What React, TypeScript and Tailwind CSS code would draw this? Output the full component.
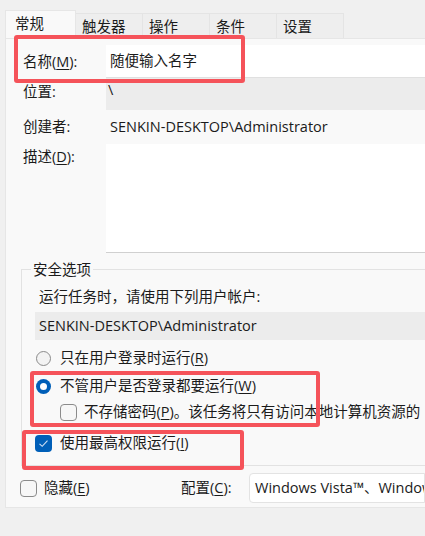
import React from "react";

const font = { fontFamily: '"Open Sans", "Noto Sans CJK SC", sans-serif' };

function U({ k }: { k: string }) {
  return (
    <>
      (<span className="underline underline-offset-2">{k}</span>)
    </>
  );
}

function Radio({ checked }: { checked?: boolean }) {
  return checked ? (
    <span className="flex h-[15px] w-[15px] shrink-0 items-center justify-center rounded-full bg-[#005fb8]">
      <span className="h-[7px] w-[7px] rounded-full bg-white" />
    </span>
  ) : (
    <span className="h-[15px] w-[15px] shrink-0 rounded-full border border-[#8b8b8b] bg-[#f3f3f3]" />
  );
}

function Check({ checked }: { checked?: boolean }) {
  return checked ? (
    <span className="flex h-[17px] w-[17px] shrink-0 items-center justify-center rounded-[4px] bg-[#005fb8]">
      <svg width="11" height="9" viewBox="0 0 11 9" fill="none">
        <path d="M1.5 4.8 L4.2 7.3 L9.5 1.6" stroke="#cfe0f3" strokeWidth="1.1" />
      </svg>
    </span>
  ) : (
    <span className="h-[17px] w-[17px] shrink-0 rounded-[4px] border border-[#8b8b8b] bg-[#f7f7f7]" />
  );
}

const tabs = ["触发器", "操作", "条件", "设置"];

export default function App() {
  return (
    <div
      className="relative flex h-[536px] w-[425px] flex-col overflow-hidden bg-[#f0f0f0] pl-[5px] pt-[11px] text-[14.5px] text-[#1b1b1b]"
      style={font}
    >
      {/* tabs */}
      <div className="flex h-[27px] items-end">
        <div className="flex h-[28px] w-[71px] items-center border-x border-t border-[#e6e6e6] bg-[#f9f9f9] pl-[9px] pb-[2px]">
          常规
        </div>
        {tabs.map((t) => (
          <div
            key={t}
            className="flex h-[25px] w-[67px] items-center border-r border-t border-[#e4e4e4] bg-[#eeeeee] pl-[6px] pt-[2px]"
          >
            {t}
          </div>
        ))}
      </div>

      {/* panel */}
      <div className="flex h-[470px] flex-col border-l border-t border-b border-[#e6e6e6] bg-[#f9f9f9] pt-[6px]">
        <div className="flex h-[33px] items-center">
          <span className="w-[100px] pl-[17px]">
            名称<U k="M" />:
          </span>
          <div className="flex h-[33px] flex-1 items-center border-b border-[#e0e0e0] bg-white pl-[4px]">
            随便输入名字
          </div>
        </div>
        <div className="flex h-[32px] items-start">
          <span className="w-[100px] pl-[17px] pt-[3px]">位置:</span>
          <div className="h-[32px] flex-1 bg-[#ececec] pl-[2px] pt-[1px]">\</div>
        </div>
        <div className="flex h-[34px] items-center">
          <span className="w-[104px] pl-[17px]">创建者:</span>
          <span>SENKIN-DESKTOP\Administrator</span>
        </div>
        <div className="flex h-[109px] items-start">
          <span className="w-[100px] pl-[17px] pt-[2px]">
            描述<U k="D" />:
          </span>
          <div className="h-[109px] flex-1 border-b border-[#d0d0d0] bg-white" />
        </div>

        {/* security group */}
        <div className="relative ml-[15px] mt-[16px] h-[197px] border-l border-t border-b border-[#e2e2e2] pl-[13px]">
          <span className="absolute left-[9px] top-[-10px] bg-[#f9f9f9] px-[2px] leading-[20px]">
            安全选项
          </span>
          <div className="pl-[4px] pt-[17px] leading-[20px]">运行任务时，请使用下列用户帐户:</div>
          <div className="mt-[5px] flex h-[28px] items-center bg-[#ececec] pl-[4px]">
            SENKIN-DESKTOP\Administrator
          </div>
          <div className="mt-[8px] flex h-[20px] items-center gap-[9px] pl-[1px]">
            <Radio />
            <span>
              只在用户登录时运行<U k="R" />
            </span>
          </div>
          <div className="mt-[8px] flex h-[20px] items-center gap-[9px] pl-[1px]">
            <Radio checked />
            <span>
              不管用户是否登录都要运行<U k="W" />
            </span>
          </div>
          <div className="mt-[6px] flex h-[20px] items-center gap-[7px] overflow-hidden whitespace-nowrap pl-[25px]">
            <Check />
            <span>
              不存储密码<U k="P" />。该任务将只有访问本地计算机资源的
            </span>
          </div>
          <div className="mt-[11px] flex h-[20px] items-center gap-[8px]">
            <Check checked />
            <span>
              使用最高权限运行<U k="I" />
            </span>
          </div>
        </div>

        <div className="mt-[7px] flex h-[30px] items-center">
          <div className="flex w-[175px] items-center gap-[7px] pl-[14px]">
            <Check />
            <span>
              隐藏<U k="E" />
            </span>
          </div>
          <span className="w-[68px]">
            配置<U k="C" />:
          </span>
          <div className="flex h-[30px] flex-1 items-center overflow-hidden whitespace-nowrap rounded-l-[4px] border border-[#e3e3e3] bg-white pl-[5px]">
            Windows Vista™、Window
          </div>
        </div>
      </div>

      {/* red annotation boxes */}
      <div className="pointer-events-none absolute left-[14px] top-[35px] h-[48px] w-[231px] rounded-[3px] border-[4px] border-[#f5535a]" />
      <div className="pointer-events-none absolute left-[30px] top-[371px] h-[56px] w-[290px] rounded-[3px] border-[4px] border-[#f5535a]" />
      <div className="pointer-events-none absolute left-[22px] top-[430px] h-[40px] w-[222px] rounded-[3px] border-[4px] border-[#f5535a]" />
    </div>
  );
}
